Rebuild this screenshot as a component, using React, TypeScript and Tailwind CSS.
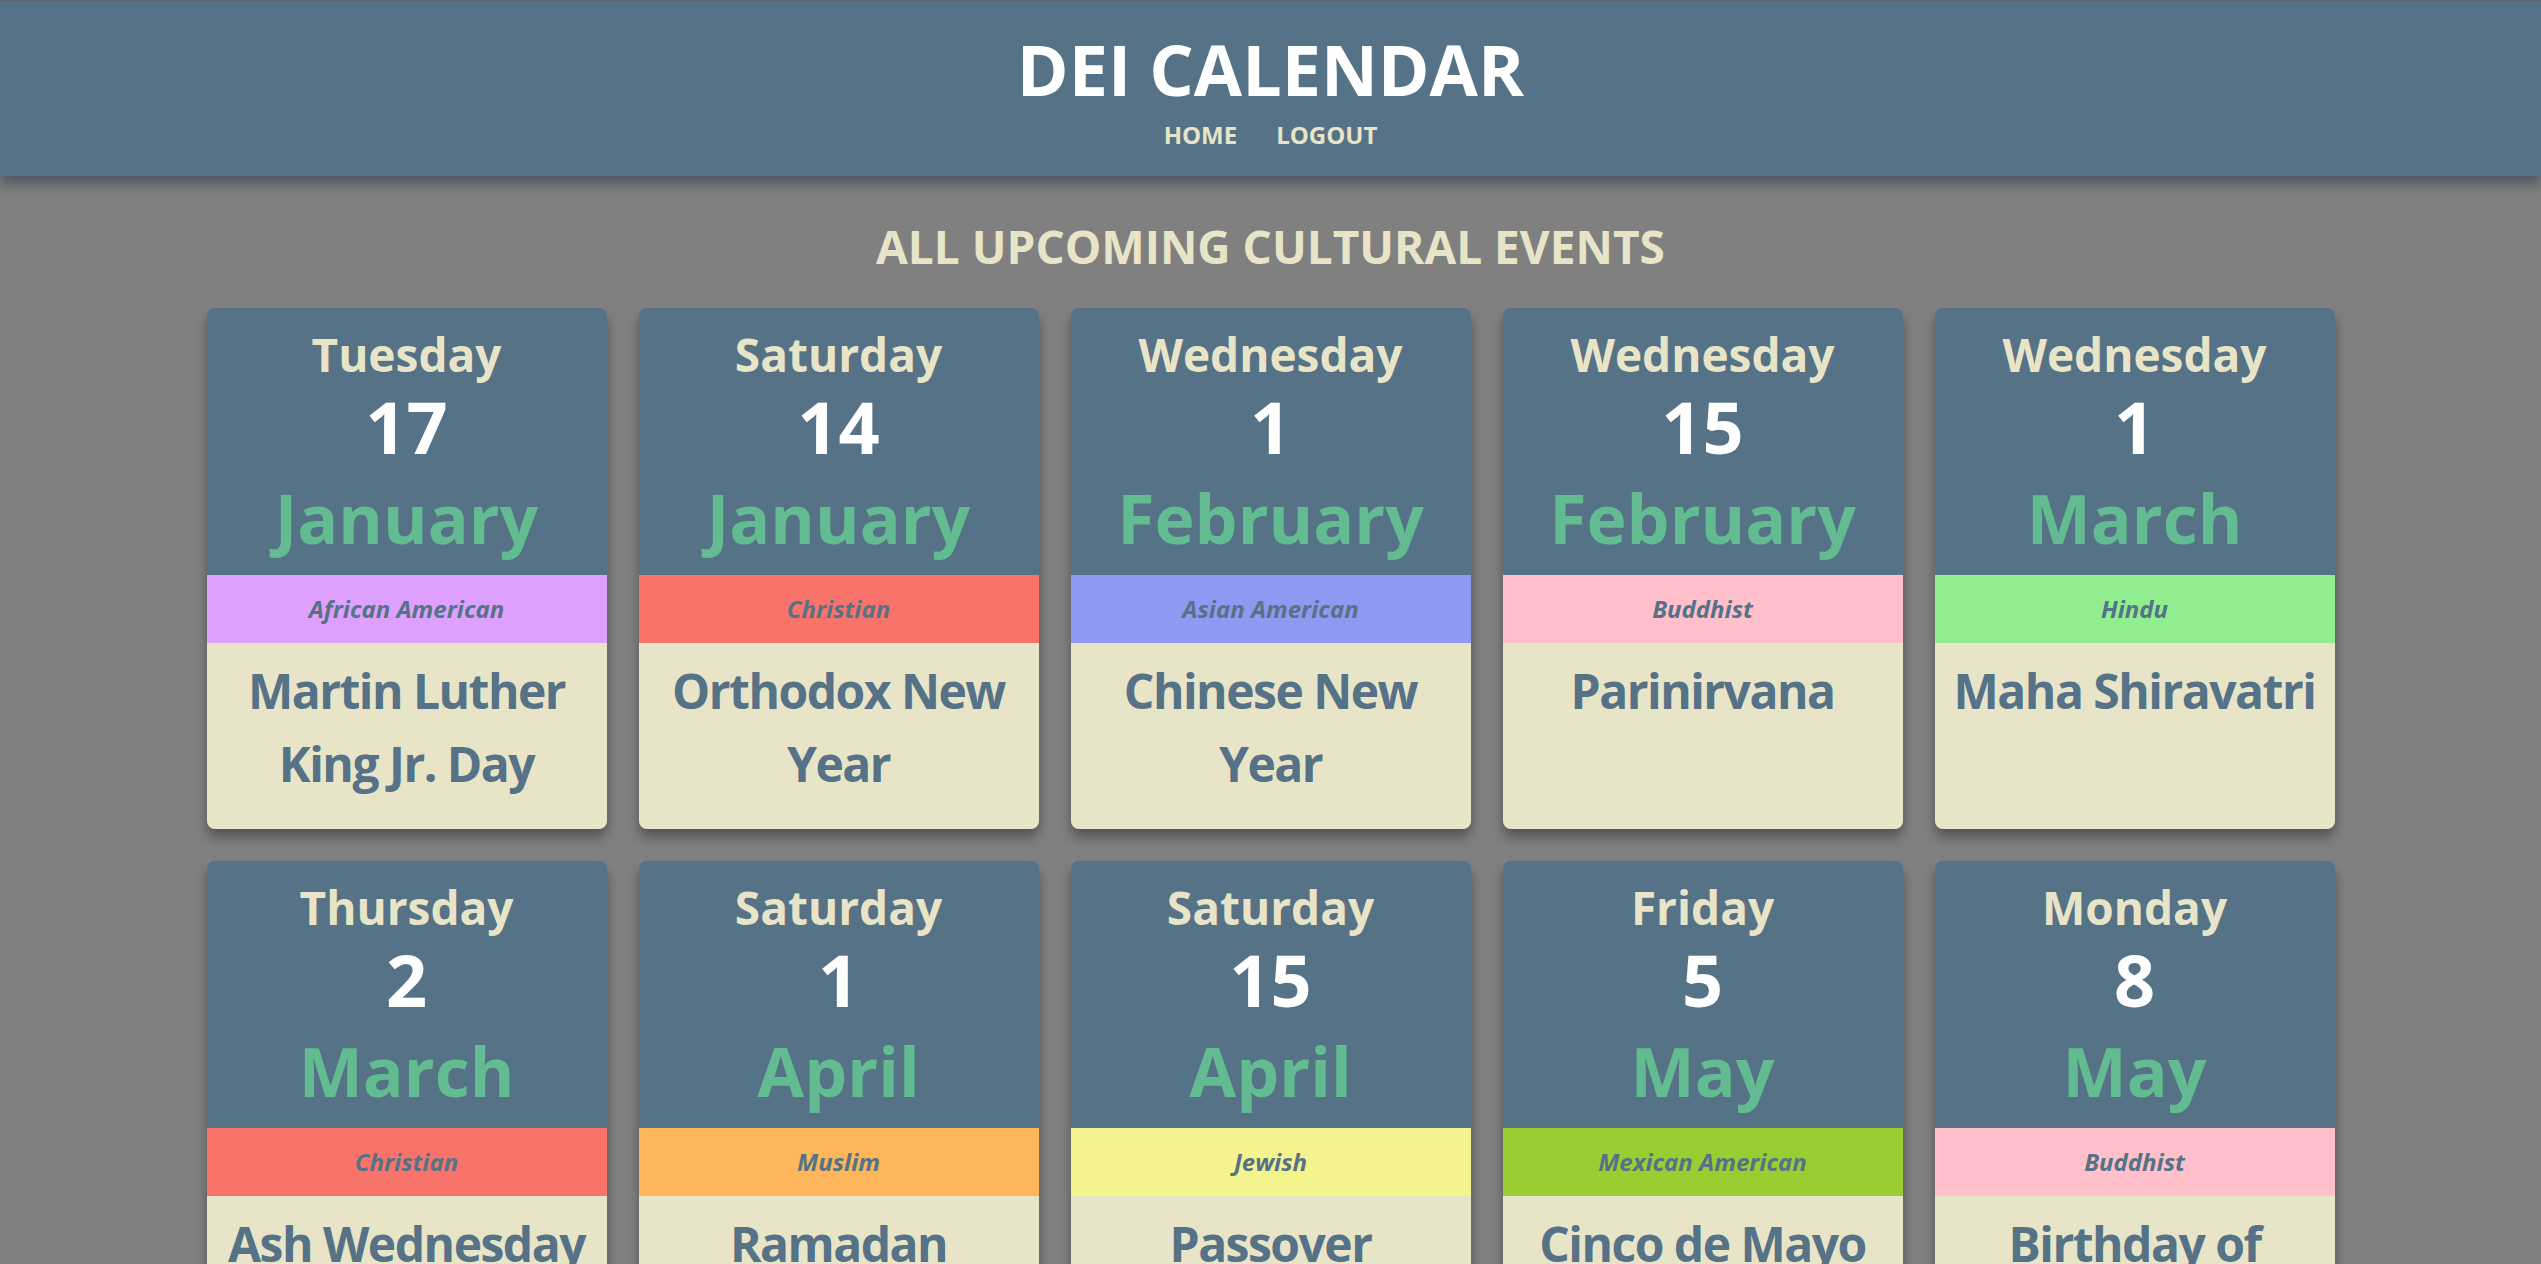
import React from 'react';

type CalEvent = {
  day: string;
  date: number;
  month: string;
  category: string;
  color: string;
  name: string;
};

const events: CalEvent[] = [
  { day: 'Tuesday', date: 17, month: 'January', category: 'African American', color: 'bg-[#dda0ff]', name: 'Martin Luther King Jr. Day' },
  { day: 'Saturday', date: 14, month: 'January', category: 'Christian', color: 'bg-[#f8746a]', name: 'Orthodox New Year' },
  { day: 'Wednesday', date: 1, month: 'February', category: 'Asian American', color: 'bg-[#9099f2]', name: 'Chinese New Year' },
  { day: 'Wednesday', date: 15, month: 'February', category: 'Buddhist', color: 'bg-[#ffbfcb]', name: 'Parinirvana' },
  { day: 'Wednesday', date: 1, month: 'March', category: 'Hindu', color: 'bg-[#90ee90]', name: 'Maha Shiravatri' },
  { day: 'Thursday', date: 2, month: 'March', category: 'Christian', color: 'bg-[#f8746a]', name: 'Ash Wednesday' },
  { day: 'Saturday', date: 1, month: 'April', category: 'Muslim', color: 'bg-[#fdb65b]', name: 'Ramadan' },
  { day: 'Saturday', date: 15, month: 'April', category: 'Jewish', color: 'bg-[#f4f48e]', name: 'Passover' },
  { day: 'Friday', date: 5, month: 'May', category: 'Mexican American', color: 'bg-[#9acd32]', name: 'Cinco de Mayo' },
  { day: 'Monday', date: 8, month: 'May', category: 'Buddhist', color: 'bg-[#ffbfcb]', name: 'Birthday of Buddha' },
];

const EventCard: React.FC<{ ev: CalEvent }> = ({ ev }) => (
  <div className="w-[400px] rounded-lg overflow-hidden shadow-[0_8px_12px_rgba(0,0,0,0.35)]">
    {/* date block */}
    <div className="h-[267px] bg-[#557286] flex flex-col items-center pt-[17px] font-bold">
      <div className="text-[46px] leading-[58px] text-[#e8e4c8]">{ev.day}</div>
      <div className="text-[72px] leading-[86px] text-white">{ev.date}</div>
      <div className="text-[68px] leading-[97px] text-[#62bb91]">{ev.month}</div>
    </div>
    <div className={`${ev.color} h-[68px] flex items-center justify-center`}>
      <span className="text-[24px] italic font-bold text-[#557286]">{ev.category}</span>
    </div>
    <div className="h-[186px] bg-[#e8e4c8] px-1 pt-[11px] text-center text-[48px] leading-[73px] tracking-[-1.5px] font-bold text-[#557286]">
      {ev.name}
    </div>
  </div>
);

export default function App() {
  return (
    <div className="min-h-screen bg-[#808080] font-['Open_Sans',sans-serif]">
      <header className="bg-[#557286] border-t border-[#5d6670] pt-[27px] pb-[25px] flex flex-col items-center shadow-[0_8px_12px_rgba(40,50,70,0.55)] relative">
        <h1 className="text-[70px] leading-[82px] font-bold text-white">DEI CALENDAR</h1>
        <nav className="mt-[9px] flex gap-[39px] text-[24px] leading-[32px] font-bold text-[#e8e4c8]">
          <a href="#">HOME</a>
          <a href="#">LOGOUT</a>
        </nav>
      </header>

      <main className="flex flex-col items-center">
        <h2 className="mt-[40px] text-[46px] leading-[60px] font-bold text-[#e8e4c8]">ALL UPCOMING CULTURAL EVENTS</h2>
        <div className="mt-[32px] grid grid-cols-5 gap-[32px] pb-16">
          {events.map((ev, i) => (
            <EventCard key={i} ev={ev} />
          ))}
        </div>
      </main>
    </div>
  );
}
